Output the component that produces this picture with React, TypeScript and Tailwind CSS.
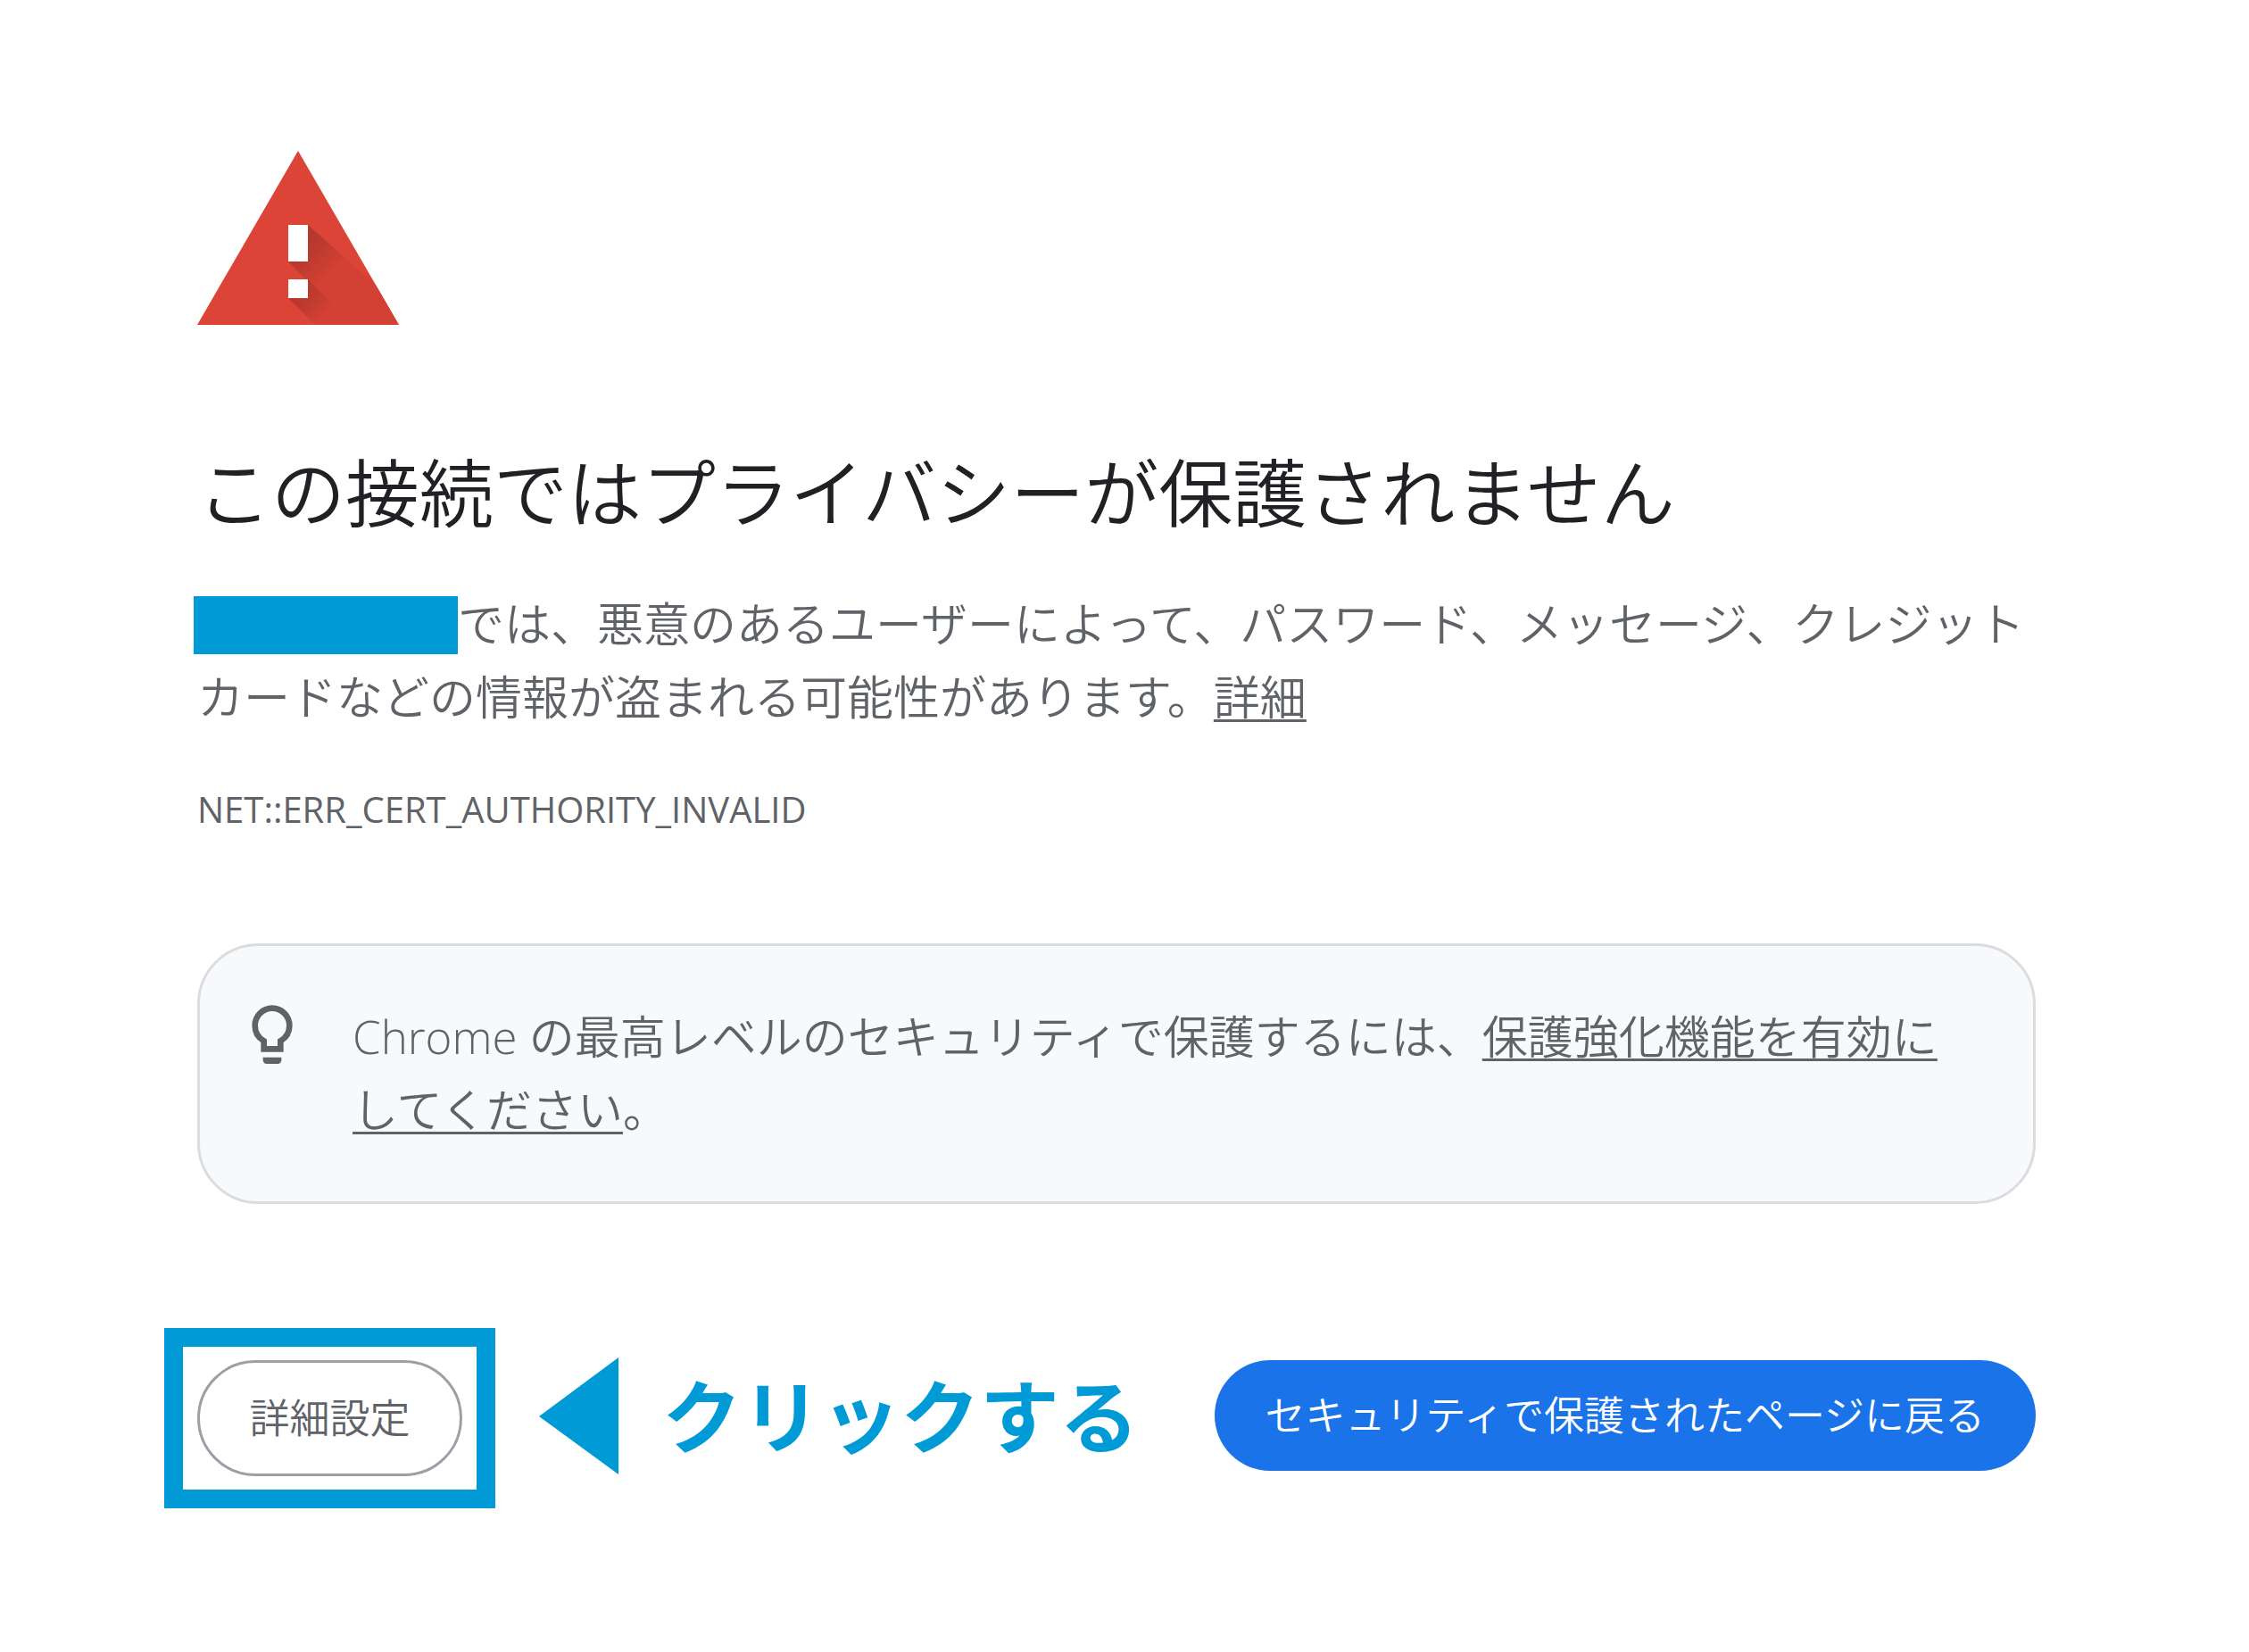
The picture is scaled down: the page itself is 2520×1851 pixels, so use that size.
import * as React from 'react';

// ──────────────────────────────────────────────
// Icons
// ──────────────────────────────────────────────
function WarningIcon() {
  return (
    <svg viewBox="0 0 226 195" className="block h-[195px] w-[226px]" aria-hidden="true">
      <defs>
        <linearGradient id="bar-shadow" gradientUnits="userSpaceOnUse" x1="112" y1="104" x2="148" y2="140">
          <stop offset="0" stopColor="#b5372d" />
          <stop offset="0.4" stopColor="#bd3a2f" />
          <stop offset="1" stopColor="#d34134" />
        </linearGradient>
        <linearGradient id="dot-shadow" gradientUnits="userSpaceOnUse" x1="114" y1="156" x2="142" y2="184">
          <stop offset="0" stopColor="#b5372d" />
          <stop offset="0.4" stopColor="#bf3a2f" />
          <stop offset="1" stopColor="#d34134" />
        </linearGradient>
        <clipPath id="triangle">
          <path d="M113 0L226 195H0z" />
        </clipPath>
      </defs>
      <path d="M113 0L226 195H0z" fill="#db4437" />
      <g clipPath="url(#triangle)">
        <path d="M124 83L226 173V195H173L102 124z" fill="url(#bar-shadow)" />
        <path d="M124 144L175 195H132L102 165z" fill="url(#dot-shadow)" />
      </g>
      <path d="M102 83h22v41h-22zM102 144h22v21h-22z" fill="#fff" />
    </svg>
  );
}

function BulbIcon() {
  return (
    <svg viewBox="0 0 138 198" className="block h-[66px] w-[46px] shrink-0" aria-hidden="true">
      <path
        d="M41 148V121C22 110 11 92 11 69a58 58 0 0 1 116 0C127 92 116 110 97 121V148z"
        fill="none"
        stroke="#5f6368"
        strokeWidth="20"
      />
      <path d="M38 176H100V186Q98 198 88 198H50Q40 198 38 186z" fill="#5f6368" />
    </svg>
  );
}

function ArrowIcon() {
  return (
    <svg viewBox="0 0 89 131" className="block h-[131px] w-[89px] shrink-0" aria-hidden="true">
      <path d="M0 66L89 0V131z" fill="#009bd7" />
    </svg>
  );
}

// ──────────────────────────────────────────────
// Page
// ──────────────────────────────────────────────
const linkClass = 'underline decoration-[3px] underline-offset-[5px]';

export default function App() {
  return (
    <main
      lang="ja"
      className="min-h-screen w-full bg-white pt-[169px] pr-[239px] pb-40 pl-[221px] font-['Open_Sans','Noto_Sans_CJK_JP',sans-serif] font-[350] text-[#5f6368]"
    >
      <WarningIcon />

      <h1 className="mt-[139px] text-[83px] leading-[98px] text-[#202124]">
        この接続ではプライバシーが保護されません
      </h1>

      <p className="mt-[57px] text-[52px] leading-[82px]">
        <span className="-ml-1 inline-block h-[65px] w-[296px] bg-[#009bd7] align-[-14px]" />
        では、悪意のあるユーザーによって、パスワード、メッセージ、クレジットカードなどの情報が盗まれる可能性があります。
        <a href="#details" className={linkClass}>詳細</a>
      </p>

      <p className="mt-[55px] text-[40px] leading-[60px] font-normal">NET::ERR_CERT_AUTHORITY_INVALID</p>

      <section className="mt-[120px] flex items-start gap-[67px] rounded-[68px] border-[3px] border-[#dadce0] bg-[#f8f9fb] px-[58px] pt-[60px] pb-[62px]">
        <div className="pt-[6px]">
          <BulbIcon />
        </div>
        <p className="text-[51px] leading-[82px]">
          Chrome の最高レベルのセキュリティで保護するには、
          <a href="#enhanced" className={linkClass}>保護強化機能を有効にしてください</a>。
        </p>
      </section>

      <div className="mt-[139px] flex items-center justify-between">
        <div className="-ml-[37px] flex items-center gap-[49px]">
          <div className="border-[21px] border-[#009bd7] px-4 py-[15px]">
            <button
              type="button"
              className="h-[130px] w-[297px] rounded-full border-[3px] border-[#9aa0a6] text-[45px]"
            >
              詳細設定
            </button>
          </div>
          <div className="flex items-center gap-[49px] pb-[6px]">
            <ArrowIcon />
            <span className="text-[89px] leading-[131px] font-bold text-[#009bd7]">クリックする</span>
          </div>
        </div>
        <div className="pb-[6px]">
          <button
            type="button"
            className="h-[124px] rounded-full bg-[#1a73e8] px-[57px] text-[45px] text-white"
          >
            セキュリティで保護されたページに戻る
          </button>
        </div>
      </div>
    </main>
  );
}
